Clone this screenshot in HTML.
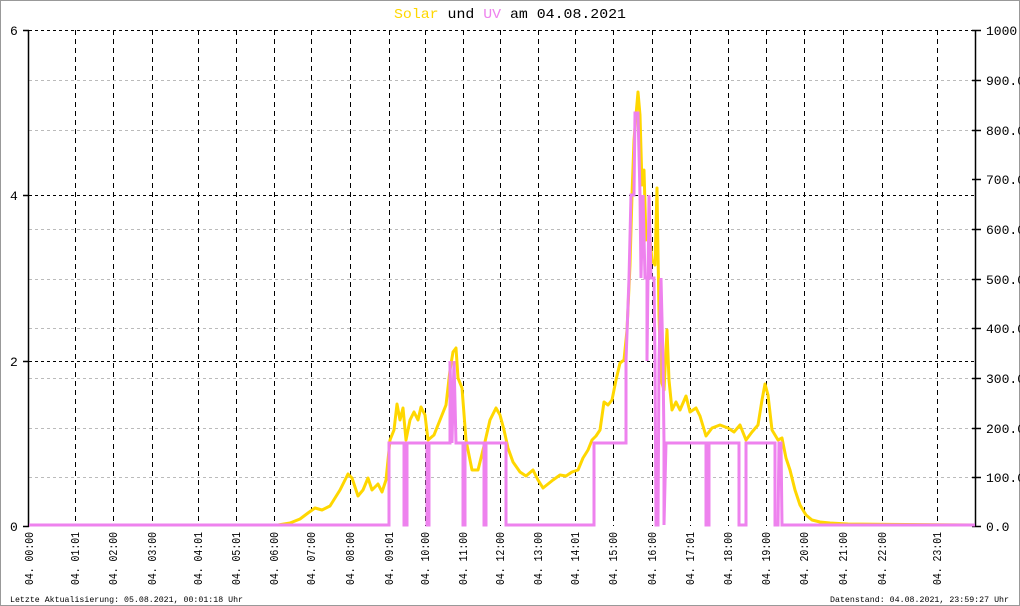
<!DOCTYPE html>
<html><head><meta charset="utf-8"><style>
html,body{margin:0;padding:0;background:#fff;}
svg{display:block;}
text{font-family:"Liberation Mono","DejaVu Sans Mono",monospace;}
</style></head><body>
<svg width="1020" height="606" viewBox="0 0 1020 606" xmlns="http://www.w3.org/2000/svg">
<rect x="0.5" y="0.5" width="1019" height="605" fill="#fff" stroke="#999"/>
<g stroke="#bbb" stroke-width="1" stroke-dasharray="3,3">
<line x1="29" y1="80.5" x2="975" y2="80.5"/><line x1="29" y1="130.5" x2="975" y2="130.5"/><line x1="29" y1="229.5" x2="975" y2="229.5"/><line x1="29" y1="279.5" x2="975" y2="279.5"/><line x1="29" y1="328.5" x2="975" y2="328.5"/><line x1="29" y1="378.5" x2="975" y2="378.5"/><line x1="29" y1="428.5" x2="975" y2="428.5"/><line x1="29" y1="477.5" x2="975" y2="477.5"/>
</g>
<g stroke="#000" stroke-width="1" stroke-dasharray="3,3">
<line x1="29" y1="30.5" x2="975" y2="30.5"/><line x1="29" y1="195.5" x2="975" y2="195.5"/><line x1="29" y1="361.5" x2="975" y2="361.5"/>
</g>
<g stroke="#000" stroke-width="1" stroke-dasharray="5,4">
<line x1="75.5" y1="30" x2="75.5" y2="526"/><line x1="113.5" y1="30" x2="113.5" y2="526"/><line x1="152.5" y1="30" x2="152.5" y2="526"/><line x1="198.5" y1="30" x2="198.5" y2="526"/><line x1="236.5" y1="30" x2="236.5" y2="526"/><line x1="274.5" y1="30" x2="274.5" y2="526"/><line x1="311.5" y1="30" x2="311.5" y2="526"/><line x1="350.5" y1="30" x2="350.5" y2="526"/><line x1="389.5" y1="30" x2="389.5" y2="526"/><line x1="425.5" y1="30" x2="425.5" y2="526"/><line x1="463.5" y1="30" x2="463.5" y2="526"/><line x1="500.5" y1="30" x2="500.5" y2="526"/><line x1="538.5" y1="30" x2="538.5" y2="526"/><line x1="575.5" y1="30" x2="575.5" y2="526"/><line x1="613.5" y1="30" x2="613.5" y2="526"/><line x1="652.5" y1="30" x2="652.5" y2="526"/><line x1="690.5" y1="30" x2="690.5" y2="526"/><line x1="728.5" y1="30" x2="728.5" y2="526"/><line x1="766.5" y1="30" x2="766.5" y2="526"/><line x1="804.5" y1="30" x2="804.5" y2="526"/><line x1="843.5" y1="30" x2="843.5" y2="526"/><line x1="882.5" y1="30" x2="882.5" y2="526"/><line x1="937.5" y1="30" x2="937.5" y2="526"/>
</g>
<g stroke="#000" stroke-width="1.5">
<line x1="28.5" y1="30" x2="28.5" y2="527"/><line x1="975.5" y1="30" x2="975.5" y2="527"/>
<line x1="23" y1="30.5" x2="29" y2="30.5"/><line x1="23" y1="195.5" x2="29" y2="195.5"/><line x1="23" y1="361.5" x2="29" y2="361.5"/><line x1="23" y1="526.5" x2="29" y2="526.5"/>
<line x1="972" y1="30.5" x2="981" y2="30.5"/><line x1="972" y1="80.5" x2="981" y2="80.5"/><line x1="972" y1="130.5" x2="981" y2="130.5"/><line x1="972" y1="179.5" x2="981" y2="179.5"/><line x1="972" y1="229.5" x2="981" y2="229.5"/><line x1="972" y1="279.5" x2="981" y2="279.5"/><line x1="972" y1="328.5" x2="981" y2="328.5"/><line x1="972" y1="378.5" x2="981" y2="378.5"/><line x1="972" y1="428.5" x2="981" y2="428.5"/><line x1="972" y1="477.5" x2="981" y2="477.5"/><line x1="972" y1="526.5" x2="981" y2="526.5"/>
</g>
<polyline fill="none" stroke="#FFD700" stroke-width="3" stroke-linejoin="round" points="29,525 278,525 290,523 300,519 308,513 315,508 322,510 330,506 340,490 348,474 352,478 358,496 363,490 368,478 372,490 378,484 382,492 386,480 390,440 394,430 397,404 400,420 403,408 406,440 410,420 414,412 418,420 421,407 425,415 428,440 434,435 440,420 446,405 450,370 453,352 456,348 458,378 462,388 466,440 472,470 478,470 484,446 490,420 496,408 500,415 504,430 508,448 513,462 520,472 526,476 533,470 538,480 543,488 548,484 553,480 560,475 566,476 572,472 578,470 583,458 588,450 592,440 596,436 600,430 604,402 608,405 612,400 616,380 620,363 624,360 627,330 630,265 632,195 634,140 636,115 638,92 640,115 642,185 644,170 646,240 649,230 652,260 655,265 657,188 659,315 661,380 664,390 667,330 669,380 672,410 676,402 680,410 686,396 690,412 696,408 700,416 706,436 712,428 720,425 728,428 734,432 740,425 746,440 752,432 758,425 762,400 765,384 768,395 772,430 778,440 782,438 786,458 790,470 795,490 800,505 806,515 812,520 820,522 830,523 848,524 975,525"/>
<polyline fill="none" stroke="#EE82EE" stroke-width="3" points="29,525 389,525 389,443 404,443 404,525 407,525 407,443 427,443 427,525 429,525 429,443 450,443 450,361 452,443 454,361 456,443 463,443 463,525 465,525 465,443 484,443 484,525 486,525 486,443 506,443 506,525 508,525 508,525 594,525 594,443 626,443 626,361 629,278 631,195 634,195 635,113 638,113 640,195 641,278 643,195 645,278 647,278 647,361 649,195 651,278 654,278 655,361 656,525 658,525 659,361 661,278 663,361 664,443 664,525 666,443 668,443 706,443 706,525 709,525 709,443 739,443 739,525 746,525 746,443 775,443 775,525 778,525 779,443 781,443 782,525 975,525"/>
<text x="510" y="18" font-size="14" text-anchor="middle" textLength="232" lengthAdjust="spacingAndGlyphs"><tspan fill="#FFD700">Solar</tspan> und <tspan fill="#EE82EE">UV</tspan> am 04.08.2021</text>
<g font-size="13" fill="#000">
<text x="10" y="35">6</text><text x="10" y="200">4</text><text x="10" y="366">2</text><text x="10" y="531">0</text>
<text x="986" y="35">1000.0</text><text x="986" y="85">900.0</text><text x="986" y="135">800.0</text><text x="986" y="184">700.0</text><text x="986" y="234">600.0</text><text x="986" y="284">500.0</text><text x="986" y="333">400.0</text><text x="986" y="383">300.0</text><text x="986" y="433">200.0</text><text x="986" y="482">100.0</text><text x="986" y="531">0.0</text>
</g>
<g font-size="11.5" fill="#000">
<text transform="translate(33,585) rotate(-90)" textLength="53" lengthAdjust="spacingAndGlyphs">04. 00:00</text>
<text transform="translate(79,585) rotate(-90)" textLength="53" lengthAdjust="spacingAndGlyphs">04. 01:01</text>
<text transform="translate(117,585) rotate(-90)" textLength="53" lengthAdjust="spacingAndGlyphs">04. 02:00</text>
<text transform="translate(156,585) rotate(-90)" textLength="53" lengthAdjust="spacingAndGlyphs">04. 03:00</text>
<text transform="translate(202,585) rotate(-90)" textLength="53" lengthAdjust="spacingAndGlyphs">04. 04:01</text>
<text transform="translate(240,585) rotate(-90)" textLength="53" lengthAdjust="spacingAndGlyphs">04. 05:01</text>
<text transform="translate(278,585) rotate(-90)" textLength="53" lengthAdjust="spacingAndGlyphs">04. 06:00</text>
<text transform="translate(315,585) rotate(-90)" textLength="53" lengthAdjust="spacingAndGlyphs">04. 07:00</text>
<text transform="translate(354,585) rotate(-90)" textLength="53" lengthAdjust="spacingAndGlyphs">04. 08:00</text>
<text transform="translate(393,585) rotate(-90)" textLength="53" lengthAdjust="spacingAndGlyphs">04. 09:01</text>
<text transform="translate(429,585) rotate(-90)" textLength="53" lengthAdjust="spacingAndGlyphs">04. 10:00</text>
<text transform="translate(467,585) rotate(-90)" textLength="53" lengthAdjust="spacingAndGlyphs">04. 11:00</text>
<text transform="translate(504,585) rotate(-90)" textLength="53" lengthAdjust="spacingAndGlyphs">04. 12:00</text>
<text transform="translate(542,585) rotate(-90)" textLength="53" lengthAdjust="spacingAndGlyphs">04. 13:00</text>
<text transform="translate(579,585) rotate(-90)" textLength="53" lengthAdjust="spacingAndGlyphs">04. 14:01</text>
<text transform="translate(617,585) rotate(-90)" textLength="53" lengthAdjust="spacingAndGlyphs">04. 15:00</text>
<text transform="translate(656,585) rotate(-90)" textLength="53" lengthAdjust="spacingAndGlyphs">04. 16:00</text>
<text transform="translate(694,585) rotate(-90)" textLength="53" lengthAdjust="spacingAndGlyphs">04. 17:01</text>
<text transform="translate(732,585) rotate(-90)" textLength="53" lengthAdjust="spacingAndGlyphs">04. 18:00</text>
<text transform="translate(770,585) rotate(-90)" textLength="53" lengthAdjust="spacingAndGlyphs">04. 19:00</text>
<text transform="translate(808,585) rotate(-90)" textLength="53" lengthAdjust="spacingAndGlyphs">04. 20:00</text>
<text transform="translate(847,585) rotate(-90)" textLength="53" lengthAdjust="spacingAndGlyphs">04. 21:00</text>
<text transform="translate(886,585) rotate(-90)" textLength="53" lengthAdjust="spacingAndGlyphs">04. 22:00</text>
<text transform="translate(941,585) rotate(-90)" textLength="53" lengthAdjust="spacingAndGlyphs">04. 23:01</text>
</g>
<g font-size="8.5" fill="#000">
<text x="10" y="602" textLength="233" lengthAdjust="spacingAndGlyphs">Letzte Aktualisierung: 05.08.2021, 00:01:18 Uhr</text>
<text x="830" y="602" textLength="179" lengthAdjust="spacingAndGlyphs">Datenstand: 04.08.2021, 23:59:27 Uhr</text>
</g>
</svg>
</body></html>
